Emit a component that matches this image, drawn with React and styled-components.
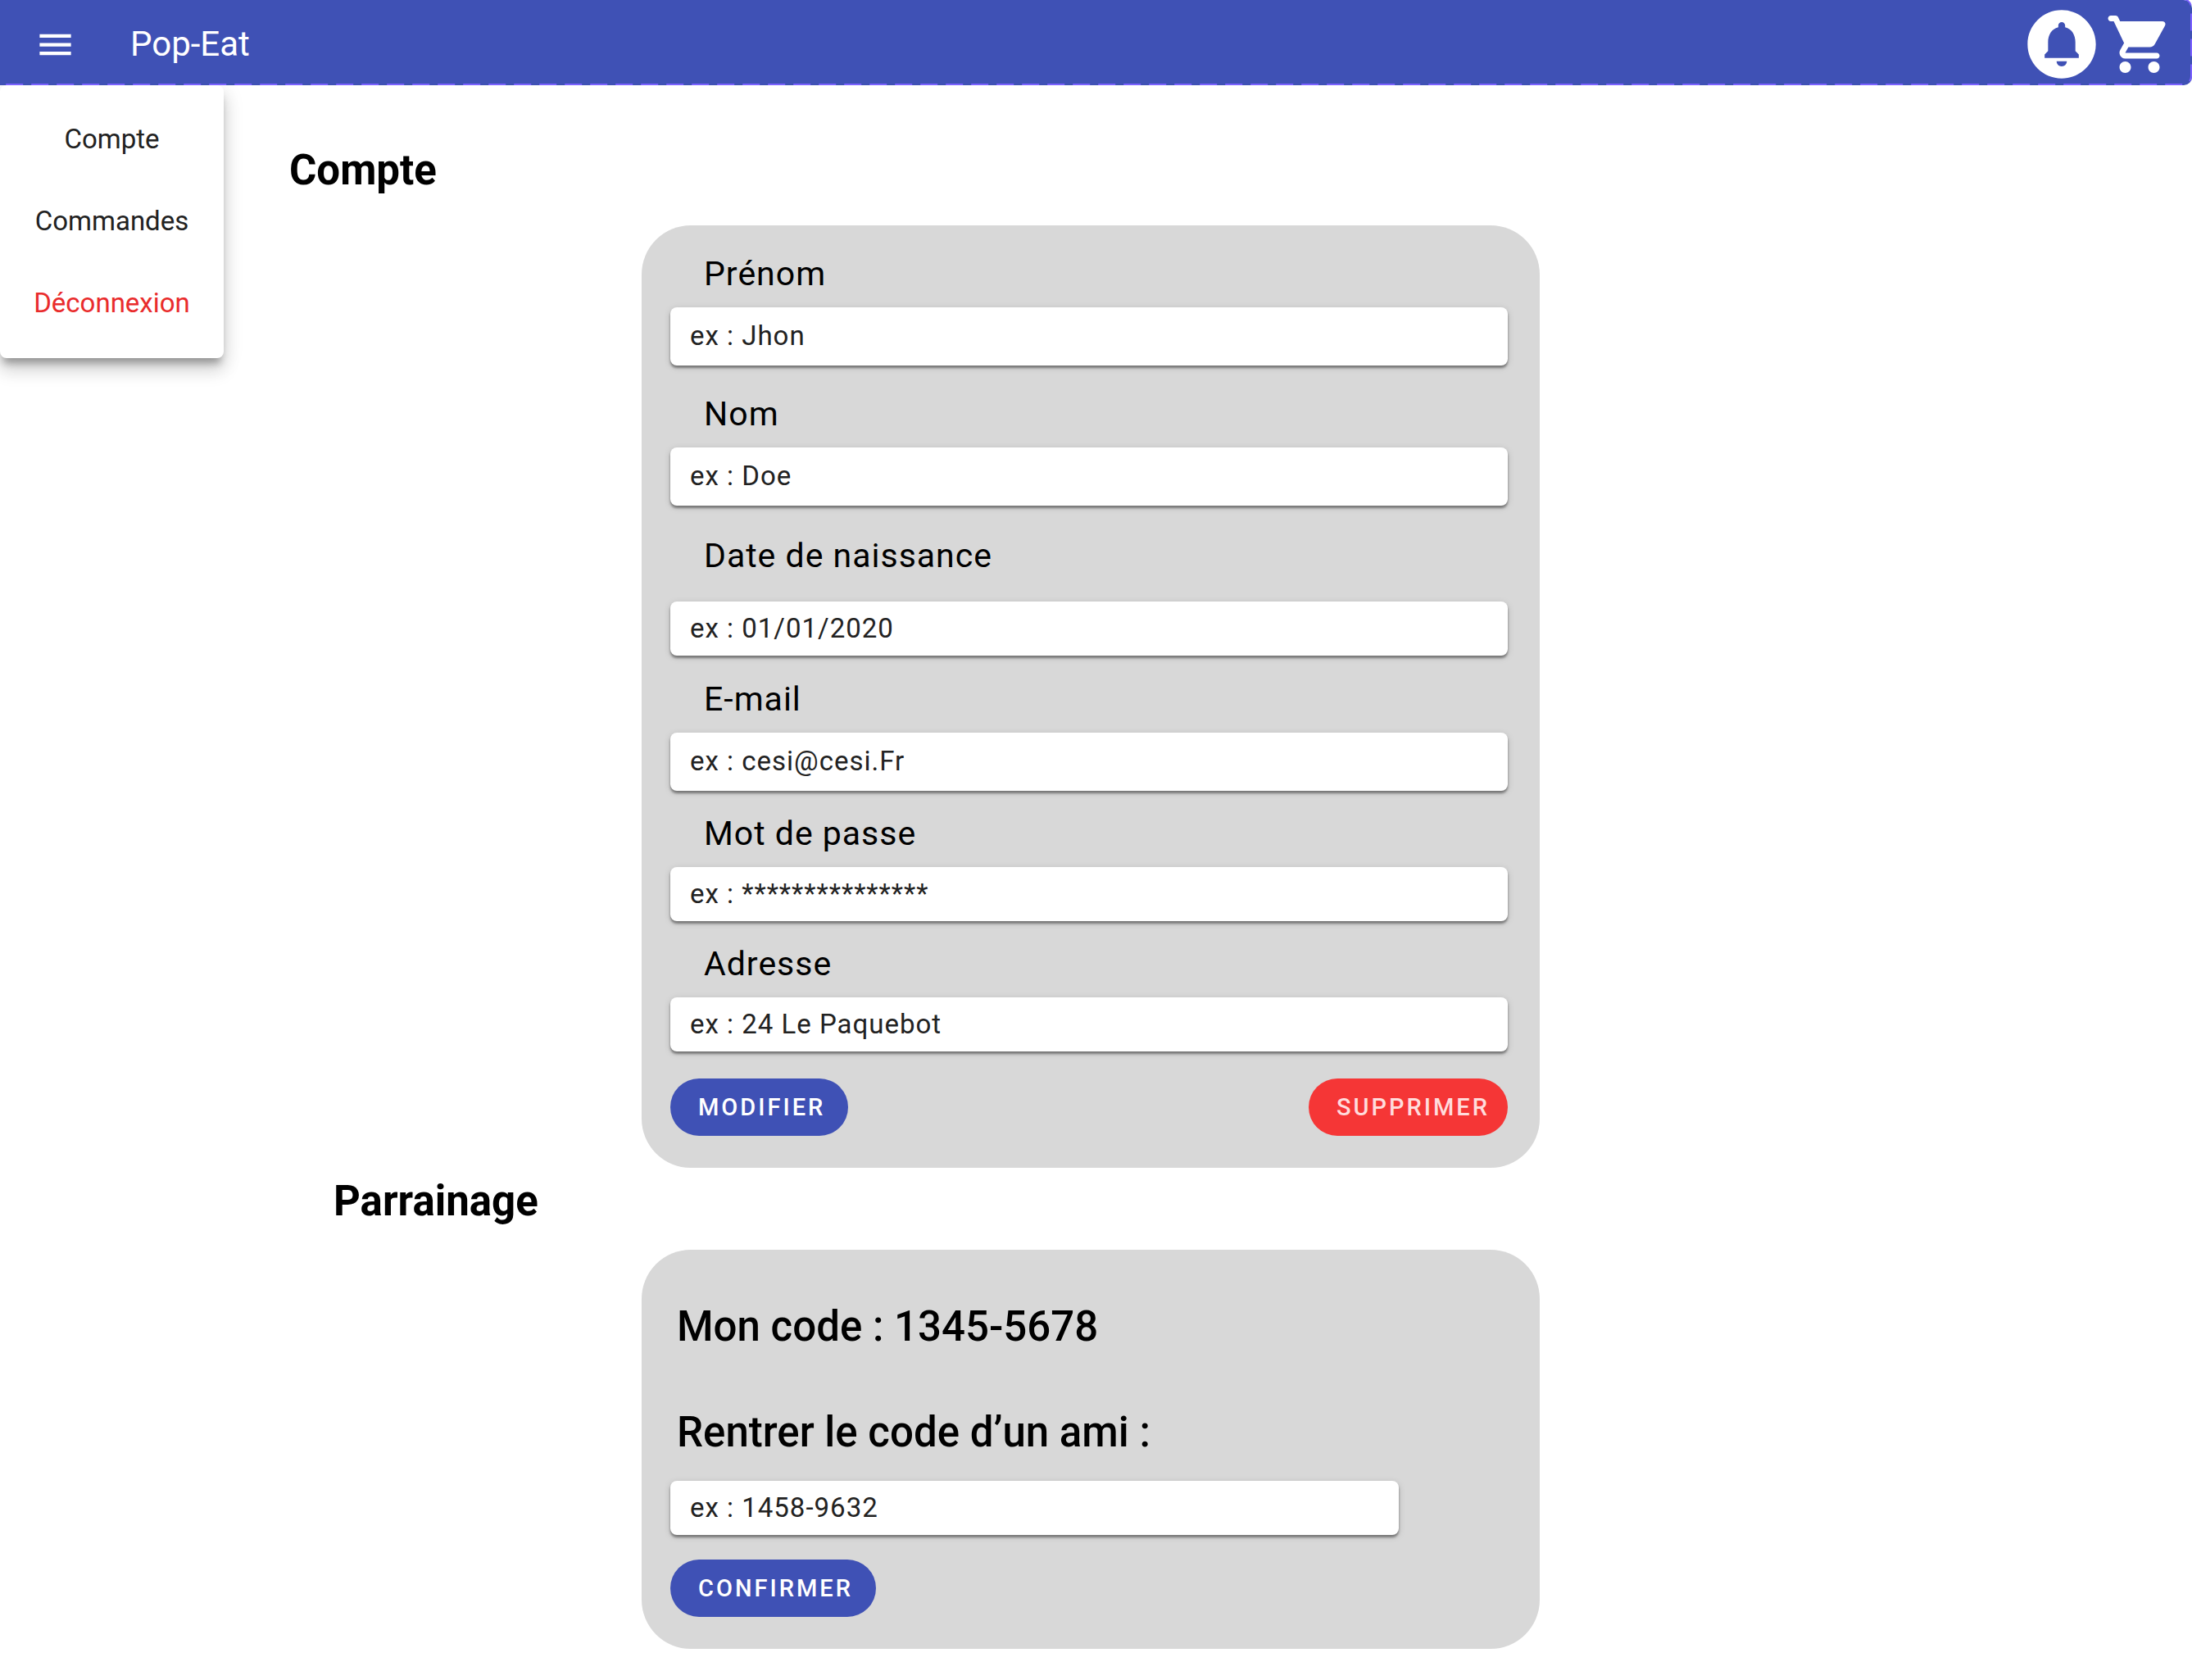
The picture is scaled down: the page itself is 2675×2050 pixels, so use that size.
import React from "react";
import styled, { createGlobalStyle } from "styled-components";

const GlobalStyle = createGlobalStyle`
  *, *::before, *::after { box-sizing: border-box; }
  body {
    margin: 0;
    background: #fff;
    color: #000;
    font-family: Roboto, "Liberation Sans", sans-serif;
  }
`;

const Header = styled.header`
  position: relative;
  display: flex;
  align-items: center;
  height: 104px;
  padding: 4px 22px 0 42px;
  border-radius: 0 10px 10px 0;
  background: #3f51b5;
  color: #fff;
`;

const DashedOutline = styled.svg`
  position: absolute;
  inset: 0;
  width: 100%;
  height: 104px;
  pointer-events: none;

  rect {
    width: calc(100% + 19px);
    height: 104px;
    fill: none;
    stroke: #7b61ff;
    stroke-width: 2px;
    stroke-dasharray: 21 10;
  }
`;

const IconButton = styled.button`
  display: flex;
  padding: 0;
  border: 0;
  background: none;
  color: inherit;
  cursor: pointer;

  svg {
    width: ${(p) => p.$size}px;
    height: ${(p) => p.$size}px;
    fill: currentColor;
  }
`;

const Brand = styled.a`
  margin-left: 66px;
  color: inherit;
  font-size: 42px;
  line-height: 48px;
  text-decoration: none;
`;

const Actions = styled.div`
  display: flex;
  align-items: center;
  gap: 3px;
  margin-left: auto;
`;

const Body = styled.div`
  display: flex;
  align-items: flex-start;
`;

const Menu = styled.nav`
  display: flex;
  flex-direction: column;
  flex: none;
  gap: 60px;
  width: 273px;
  padding: 46px 0 47px;
  border-radius: 8px;
  background: #fff;
  box-shadow: 0 10px 10px -4px rgba(0, 0, 0, 0.3),
    0 16px 20px 2px rgba(0, 0, 0, 0.1), 0 6px 24px 2px rgba(0, 0, 0, 0.1);
`;

const MenuLink = styled.a`
  color: ${(p) => (p.$danger ? "#e92c2c" : "#222")};
  font-size: 33px;
  line-height: 40px;
  text-align: center;
  text-decoration: none;
`;

const Main = styled.main`
  display: grid;
  flex: 1;
  grid-template-columns: 430fr 1096fr 796fr;
  padding: 74px 0 38px 80px;
`;

const SectionTitle = styled.h2`
  grid-column: 1 / -1;
  margin: ${(p) => (p.$nested ? "11px 0 29px 54px" : "0 0 37px")};
  font-size: 51px;
  font-weight: 700;
  line-height: 60px;
`;

const Panel = styled.form`
  grid-column: 2;
  display: flex;
  flex-direction: column;
  padding: ${(p) => p.$top}px 39px 39px 35px;
  border-radius: 60px;
  background: #d8d8d8;
`;

const Field = styled.div`
  display: flex;
  flex-direction: column;
  gap: ${(p) => (p.$loose ? 32 : 17)}px;
  margin-bottom: ${(p) => p.$after}px;
`;

const Label = styled.label`
  margin-left: 41px;
  font-size: 41px;
  line-height: 48px;
  letter-spacing: 1px;
`;

const Input = styled.input`
  width: ${(p) => (p.$short ? "87%" : "100%")};
  height: ${(p) => (p.$tall ? 71 : 66)}px;
  padding: 0 24px 2px;
  border: 0;
  border-radius: 8px;
  outline: 0;
  background: #fff;
  box-shadow: 0 3px 3px rgba(0, 0, 0, 0.4), 0 2px 8px rgba(0, 0, 0, 0.15);
  color: #222;
  font: 33px/40px Roboto, "Liberation Sans", sans-serif;
  letter-spacing: 1px;

  &::placeholder {
    color: #222;
    opacity: 1;
  }
`;

const ButtonRow = styled.div`
  display: flex;
  justify-content: space-between;
`;

const Button = styled.button`
  height: 70px;
  padding: 0 ${(p) => (p.$danger ? 22 : 28)}px 0 34px;
  border: 0;
  border-radius: 35px;
  background: ${(p) => (p.$danger ? "#f53636" : "#3f51b5")};
  color: ${(p) => (p.$danger ? "#ffdcdc" : "#fff")};
  font: 500 29px/36px Roboto, "Liberation Sans", sans-serif;
  letter-spacing: 3px;
  text-transform: uppercase;
  cursor: pointer;
`;

const CodeText = styled.p`
  margin: 0 0 69px 8px;
  font-size: 51px;
  font-weight: 500;
  line-height: 60px;
`;

const CodeLabel = styled.label`
  margin: 0 0 29px 8px;
  font-size: 51px;
  font-weight: 500;
  line-height: 60px;
`;

const CodeActions = styled(ButtonRow)`
  margin-top: 30px;
`;

const fields = [
  { id: "prenom", label: "Prénom", hint: "ex : Jhon", tall: true, after: 35 },
  { id: "nom", label: "Nom", hint: "ex : Doe", tall: true, after: 37 },
  { id: "naissance", label: "Date de naissance", hint: "ex : 01/01/2020", loose: true, after: 29 },
  { id: "email", label: "E-mail", hint: "ex : cesi@cesi.Fr", type: "email", tall: true, after: 28 },
  { id: "passe", label: "Mot de passe", hint: "ex : ***************", type: "password", after: 28 },
  { id: "adresse", label: "Adresse", hint: "ex : 24 Le Paquebot", after: 33 },
];

export default function App() {
  return (
    <>
      <GlobalStyle />
      <Header>
        <IconButton type="button" $size={51} aria-label="Menu">
          <svg viewBox="0 0 24 24">
            <path d="M3 18h18v-2H3v2zm0-5h18v-2H3v2zm0-7v2h18V6H3z" />
          </svg>
        </IconButton>
        <Brand href="#">Pop-Eat</Brand>
        <Actions>
          <IconButton type="button" $size={100} aria-label="Notifications">
            <svg viewBox="0 0 24 24">
              <path d="M12 2C6.48 2 2 6.48 2 12s4.48 10 10 10 10-4.48 10-10S17.52 2 12 2zm0 16.5c-.83 0-1.5-.67-1.5-1.5h3c0 .83-.67 1.5-1.5 1.5zm5-2.5H7v-1l1-1v-2.61C8 9.27 9.03 7.47 11 7v-.5c0-.57.43-1 1-1s1 .43 1 1V7c1.97.47 3 2.28 3 4.39V14l1 1v1z" />
            </svg>
          </IconButton>
          <IconButton type="button" $size={84} aria-label="Panier">
            <svg viewBox="0 0 24 24">
              <path d="M7 18c-1.1 0-1.99.9-1.99 2S5.9 22 7 22s2-.9 2-2-.9-2-2-2zM1 3c0 .55.45 1 1 1h1l3.6 7.59-1.35 2.44C4.52 15.37 5.48 17 7 17h11c.55 0 1-.45 1-1s-.45-1-1-1H7l1.1-2h7.45c.75 0 1.41-.41 1.75-1.03l3.58-6.49c.37-.66-.11-1.48-.87-1.48H5.21l-.67-1.43c-.16-.35-.52-.57-.9-.57H2c-.55 0-1 .45-1 1zm16 15c-1.1 0-1.99.9-1.99 2s.89 2 1.99 2 2-.9 2-2-.9-2-2-2z" />
            </svg>
          </IconButton>
        </Actions>
        <DashedOutline aria-hidden="true">
          <rect x="-20" y="-1" rx="10" />
        </DashedOutline>
      </Header>
      <Body>
        <Menu>
          <MenuLink href="#compte">Compte</MenuLink>
          <MenuLink href="#commandes">Commandes</MenuLink>
          <MenuLink href="#deconnexion" $danger>Déconnexion</MenuLink>
        </Menu>
        <Main>
          <SectionTitle>Compte</SectionTitle>
          <Panel $top={35} onSubmit={(e) => e.preventDefault()}>
            {fields.map((f) => (
              <Field key={f.id} $loose={f.loose} $after={f.after}>
                <Label htmlFor={f.id}>{f.label}</Label>
                <Input id={f.id} type={f.type || "text"} placeholder={f.hint} $tall={f.tall} />
              </Field>
            ))}
            <ButtonRow>
              <Button type="submit">Modifier</Button>
              <Button type="button" $danger>Supprimer</Button>
            </ButtonRow>
          </Panel>
          <SectionTitle $nested>Parrainage</SectionTitle>
          <Panel $top={64} onSubmit={(e) => e.preventDefault()}>
            <CodeText>Mon code : 1345-5678</CodeText>
            <CodeLabel htmlFor="code-ami">Rentrer le code d’un ami :</CodeLabel>
            <Input id="code-ami" type="text" placeholder="ex : 1458-9632" $short />
            <CodeActions>
              <Button type="submit">Confirmer</Button>
            </CodeActions>
          </Panel>
        </Main>
      </Body>
    </>
  );
}
